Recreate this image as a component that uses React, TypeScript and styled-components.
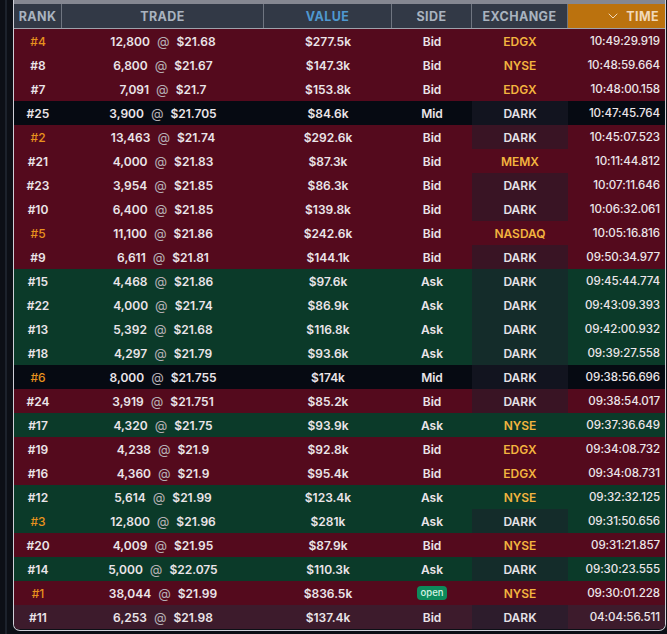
import React from 'react';
import styled, {createGlobalStyle} from "styled-components";

const GlobalStyle = createGlobalStyle`
  html, body {
    margin: 0;
    padding: 0;
    background: #0c0f16;
  }
  body {
    font-family: Inter, "Noto Sans", "Liberation Sans", sans-serif;
  }
`

type Side = 'Bid' | 'Ask' | 'Mid'

interface Trade {
    rank: number
    top?: boolean
    size: string
    price: string
    value: string
    side: Side
    open?: boolean
    exchange: string
    time: string
    hover?: boolean
}

const trades: Trade[] = [
    {rank: 4, top: true, size: '12,800', price: '$21.68', value: '$277.5k', side: 'Bid', exchange: 'EDGX', time: '10:49:29.919'},
    {rank: 8, size: '6,800', price: '$21.67', value: '$147.3k', side: 'Bid', exchange: 'NYSE', time: '10:48:59.664'},
    {rank: 7, size: '7,091', price: '$21.7', value: '$153.8k', side: 'Bid', exchange: 'EDGX', time: '10:48:00.158'},
    {rank: 25, size: '3,900', price: '$21.705', value: '$84.6k', side: 'Mid', exchange: 'DARK', time: '10:47:45.764'},
    {rank: 2, top: true, size: '13,463', price: '$21.74', value: '$292.6k', side: 'Bid', exchange: 'DARK', time: '10:45:07.523'},
    {rank: 21, size: '4,000', price: '$21.83', value: '$87.3k', side: 'Bid', exchange: 'MEMX', time: '10:11:44.812'},
    {rank: 23, size: '3,954', price: '$21.85', value: '$86.3k', side: 'Bid', exchange: 'DARK', time: '10:07:11.646'},
    {rank: 10, size: '6,400', price: '$21.85', value: '$139.8k', side: 'Bid', exchange: 'DARK', time: '10:06:32.061'},
    {rank: 5, top: true, size: '11,100', price: '$21.86', value: '$242.6k', side: 'Bid', exchange: 'NASDAQ', time: '10:05:16.816'},
    {rank: 9, size: '6,611', price: '$21.81', value: '$144.1k', side: 'Bid', exchange: 'DARK', time: '09:50:34.977'},
    {rank: 15, size: '4,468', price: '$21.86', value: '$97.6k', side: 'Ask', exchange: 'DARK', time: '09:45:44.774'},
    {rank: 22, size: '4,000', price: '$21.74', value: '$86.9k', side: 'Ask', exchange: 'DARK', time: '09:43:09.393'},
    {rank: 13, size: '5,392', price: '$21.68', value: '$116.8k', side: 'Ask', exchange: 'DARK', time: '09:42:00.932'},
    {rank: 18, size: '4,297', price: '$21.79', value: '$93.6k', side: 'Ask', exchange: 'DARK', time: '09:39:27.558'},
    {rank: 6, top: true, size: '8,000', price: '$21.755', value: '$174k', side: 'Mid', exchange: 'DARK', time: '09:38:56.696'},
    {rank: 24, size: '3,919', price: '$21.751', value: '$85.2k', side: 'Bid', exchange: 'DARK', time: '09:38:54.017'},
    {rank: 17, size: '4,320', price: '$21.75', value: '$93.9k', side: 'Ask', exchange: 'NYSE', time: '09:37:36.649'},
    {rank: 19, size: '4,238', price: '$21.9', value: '$92.8k', side: 'Bid', exchange: 'EDGX', time: '09:34:08.732'},
    {rank: 16, size: '4,360', price: '$21.9', value: '$95.4k', side: 'Bid', exchange: 'EDGX', time: '09:34:08.731'},
    {rank: 12, size: '5,614', price: '$21.99', value: '$123.4k', side: 'Ask', exchange: 'NYSE', time: '09:32:32.125'},
    {rank: 3, top: true, size: '12,800', price: '$21.96', value: '$281k', side: 'Ask', exchange: 'DARK', time: '09:31:50.656'},
    {rank: 20, size: '4,009', price: '$21.95', value: '$87.9k', side: 'Bid', exchange: 'NYSE', time: '09:31:21.857'},
    {rank: 14, size: '5,000', price: '$22.075', value: '$110.3k', side: 'Ask', exchange: 'DARK', time: '09:30:23.555'},
    {rank: 1, top: true, size: '38,044', price: '$21.99', value: '$836.5k', side: 'Bid', open: true, exchange: 'NYSE', time: '09:30:01.228'},
    {rank: 11, size: '6,253', price: '$21.98', value: '$137.4k', side: 'Bid', exchange: 'DARK', time: '04:04:56.511', hover: true},
]

const COLUMNS = '48px 202px 128px 80px 96px 1fr'

const rowColors: Record<Side, string> = {
    Bid: '#540a1d',
    Ask: '#0b3a29',
    Mid: '#060a12',
}

const Screen = styled.div`
  width: 667px;
  height: 634px;
  overflow: hidden;
  display: flex;
  background: #0c0f16;
`

const Gutter = styled.div`
  width: 13px;
  flex-shrink: 0;
  background: linear-gradient(to right, transparent 5px, #1c222c 5px, #1c222c 7px, transparent 7px);
`

const Panel = styled.div`
  width: 651px;
  height: 630px;
  border: 1.5px solid #cfd0d8;
  border-top: none;
  border-radius: 0 0 7px 7px;
  overflow: hidden;
  display: flex;
  flex-direction: column;
  background: #0c0f16;
`

const HeaderRow = styled.div`
  display: grid;
  grid-template-columns: ${COLUMNS};
  height: 24px;
  border-top: 4px solid #858791;
  border-bottom: 1px solid #9ea2ab;
  background: #323946;
`

const HeadCell = styled.div<{ $accent?: 'value' | 'time' }>`
  display: flex;
  align-items: center;
  justify-content: ${p => p.$accent === 'time' ? 'flex-end' : 'center'};
  gap: 8px;
  padding-right: ${p => p.$accent === 'time' ? '6px' : '0'};
  font-size: 12.5px;
  font-weight: 700;
  letter-spacing: 0.4px;
  color: ${p => p.$accent === 'value' ? '#4f98d0' : p.$accent === 'time' ? '#f1d9bb' : '#a9b3bf'};
  background: ${p => p.$accent === 'time' ? '#bb720e' : 'transparent'};
  border-right: ${p => p.$accent === 'time' ? 'none' : '1.5px solid #6f7580'};
`

const Body = styled.div`
  display: flex;
  flex-direction: column;
`

const Row = styled.div<{ $side: Side; $hover?: boolean }>`
  display: grid;
  grid-template-columns: ${COLUMNS};
  height: 24px;
  background: ${p => p.$hover ? '#3d1b2c' : rowColors[p.$side]};
  color: #ebe5e9;
  font-size: 12px;
  font-weight: 600;
`

const Cell = styled.div<{ $align?: 'center' | 'right' }>`
  display: flex;
  align-items: center;
  justify-content: ${p => p.$align === 'right' ? 'flex-end' : 'center'};
  padding-right: ${p => p.$align === 'right' ? '5px' : '0'};
  white-space: nowrap;
`

const RankCell = styled(Cell)<{ $top?: boolean }>`
  color: ${p => p.$top ? '#e8921e' : '#ebe5e9'};
  font-weight: ${p => p.$top ? 500 : 600};
`

const At = styled.span`
  color: #b4aeb3;
  font-weight: 400;
  font-size: 13px;
  margin: 0 7px;
`

const ExchangeCell = styled(Cell)<{ $dark: boolean; $venue: boolean }>`
  background: ${p => p.$dark ? 'rgba(30, 30, 44, 0.5)' : 'transparent'};
  color: ${p => p.$venue ? '#f3b43f' : '#e6e2e8'};
`

const TimeCell = styled(Cell)`
  font-size: 11.6px;
  font-weight: 500;
  letter-spacing: -0.1px;
`

const OpenBadge = styled.span`
  background: #0d8a5b;
  color: #d5f3e4;
  font-size: 9.5px;
  font-weight: 500;
  padding: 2px 4px;
  border-radius: 4px;
  line-height: 1;
`

const Chevron = () => (
    <svg width="10" height="6" viewBox="0 0 10 6" fill="none">
        <path d="M1 1 L5 5 L9 1" stroke="#f1d9bb" strokeWidth="1" strokeLinecap="round" strokeLinejoin="round"/>
    </svg>
)

const App: React.FC = () => {
    return (
        <Screen>
            <GlobalStyle/>
            <Gutter/>
            <Panel>
                <HeaderRow>
                    <HeadCell>RANK</HeadCell>
                    <HeadCell>TRADE</HeadCell>
                    <HeadCell $accent="value">VALUE</HeadCell>
                    <HeadCell>SIDE</HeadCell>
                    <HeadCell>EXCHANGE</HeadCell>
                    <HeadCell $accent="time"><Chevron/>TIME</HeadCell>
                </HeaderRow>
                <Body>
                    {trades.map(t => (
                        <Row key={t.rank} $side={t.side} $hover={t.hover}>
                            <RankCell $top={t.top}>#{t.rank}</RankCell>
                            <Cell>{t.size}<At>@</At>{t.price}</Cell>
                            <Cell>{t.value}</Cell>
                            <Cell>{t.open ? <OpenBadge>open</OpenBadge> : t.side}</Cell>
                            <ExchangeCell $dark={t.exchange === 'DARK'} $venue={t.exchange !== 'DARK'}>
                                {t.exchange}
                            </ExchangeCell>
                            <TimeCell $align="right">{t.time}</TimeCell>
                        </Row>
                    ))}
                </Body>
            </Panel>
        </Screen>
    )
}

export default App;
